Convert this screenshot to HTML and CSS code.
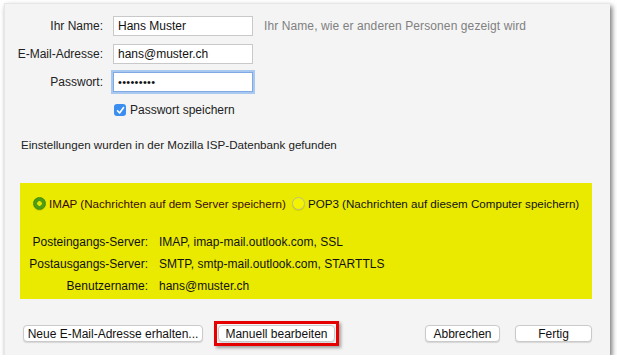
FILE: index.html
```html
<!DOCTYPE html>
<html>
<head>
    <meta charset="UTF-8">
    <title>Konto einrichten</title>
    <link rel="stylesheet" href="styles.css">
</head>
<body>
    <div class="window">
        <form class="account">
            <label class="field-label" for="name">Ihr Name:</label>
            <input class="field" type="text" id="name" value="Hans Muster">
            <span class="hint">Ihr Name, wie er anderen Personen gezeigt wird</span>

            <label class="field-label" for="email">E-Mail-Adresse:</label>
            <input class="field" type="text" id="email" value="hans@muster.ch">
            <span></span>

            <label class="field-label" for="pass">Passwort:</label>
            <input class="field focused" type="password" id="pass" value="123456789">
            <span></span>

            <span></span>
            <label class="remember"><span class="check">
                <svg width="9" height="9" viewBox="0 0 9 9"><path d="M1.5 4.8 L3.6 7 L7.6 1.6" fill="none" stroke="#fff" stroke-width="1.6" stroke-linecap="round" stroke-linejoin="round"/></svg>
            </span>Passwort speichern</label>
            <span></span>
        </form>

        <p class="found">Einstellungen wurden in der Mozilla ISP-Datenbank gefunden</p>

        <div class="config">
            <div class="protocols">
                <label class="proto imap"><span class="radio on"></span>IMAP (Nachrichten auf dem Server speichern)</label>
                <label class="proto"><span class="radio"></span>POP3 (Nachrichten auf diesem Computer speichern)</label>
            </div>
            <div class="servers">
                <span class="srv-label">Posteingangs-Server:</span>
                <span>IMAP, imap-mail.outlook.com, SSL</span>
                <span class="srv-label">Postausgangs-Server:</span>
                <span>SMTP, smtp-mail.outlook.com, STARTTLS</span>
                <span class="srv-label">Benutzername:</span>
                <span>hans@muster.ch</span>
            </div>
        </div>

        <div class="actions">
            <button class="btn btn-new" type="button">Neue E-Mail-Adresse erhalten...</button>
            <div class="marked">
                <button class="btn btn-manual" type="button">Manuell bearbeiten</button>
            </div>
            <div class="spacer"></div>
            <button class="btn btn-cancel" type="button">Abbrechen</button>
            <button class="btn btn-done" type="button">Fertig</button>
        </div>
    </div>
</body>
</html>
```

FILE: styles.css
```css
body {
    margin: 0;
    background-color: #fff;
    font-family: "Liberation Sans", Arial, sans-serif;
    font-size: 12px;
    color: #222;
}

.window {
    margin: 3px 0 0 4px;
    width: 606px;
    height: 352px;
    box-sizing: border-box;
    background-color: #f4f4f4;
    border-top: 1px solid #e6e6e6;
    border-left: 1px solid #e6e6e6;
    box-shadow: 2px 3px 5px rgba(0, 0, 0, 0.55);
}

.account {
    display: grid;
    grid-template-columns: 98px 140px auto;
    grid-auto-rows: 20px;
    column-gap: 10px;
    row-gap: 8px;
    align-items: center;
    padding: 12px 0 0 0;
}

.field-label {
    text-align: right;
}

.field {
    height: 20px;
    box-sizing: border-box;
    border: 1px solid #c9c9c9;
    background-color: #fff;
    padding: 0 4px;
    font-family: inherit;
    font-size: 12px;
    color: #111;
    outline: none;
}

.focused {
    border: 1px solid #7fa9e3;
    box-shadow: 0 0 0 2px #a9c8f0;
    font-size: 11px;
    letter-spacing: 0.3px;
}

.hint {
    color: #808080;
    padding-left: 1px;
    letter-spacing: 0.1px;
}

.remember {
    display: flex;
    align-items: center;
    gap: 4px;
    margin-left: 1px;
}

.check {
    width: 12px;
    height: 12px;
    border-radius: 3px;
    background-color: #3b8ef0;
    display: flex;
    align-items: center;
    justify-content: center;
}

.found {
    margin: 17px 0 0 16px;
    line-height: 16px;
    font-size: 11.6px;
}

.config {
    margin: 30px 0 0 15px;
    width: 572px;
    height: 116px;
    background-color: #eaea00;
    box-sizing: border-box;
    padding-top: 13px;
}

.protocols {
    display: flex;
    align-items: center;
    gap: 6px;
    padding-left: 13px;
    height: 15px;
    white-space: nowrap;
    font-size: 11.6px;
}

.proto {
    display: flex;
    align-items: center;
    gap: 3px;
    color: #111;
    flex-shrink: 0;
}

.imap {
    color: #3a0c00;
}

.radio {
    flex-shrink: 0;
    width: 13px;
    height: 13px;
    border-radius: 50%;
    box-sizing: border-box;
    border: 1px solid #bdbd88;
    background-color: #f4f400;
    box-shadow: 0 1px 1px rgba(0, 0, 0, 0.1);
}

.radio.on {
    border: 1px solid #3f8c0c;
    background: radial-gradient(circle, #e4e400 0, #e4e400 2px, #4d9c12 2.6px);
}

.servers {
    display: grid;
    grid-template-columns: 128px auto;
    column-gap: 11px;
    grid-auto-rows: 22px;
    align-items: center;
    margin-top: 20px;
    color: #111;
}

.srv-label {
    text-align: right;
}

.actions {
    display: flex;
    align-items: center;
    margin-top: 22px;
    padding: 0 18px 0 18px;
}

.btn {
    height: 17px;
    box-sizing: border-box;
    background-color: #fff;
    border: 1px solid #cacaca;
    border-radius: 4px;
    box-shadow: 0 1px 1px rgba(0, 0, 0, 0.12);
    font-family: inherit;
    font-size: 12px;
    color: #111;
    padding: 0;
}

.btn-new {
    width: 180px;
}

.marked {
    margin-left: 11px;
    border: 3px solid #e60000;
    padding: 1px;
    box-shadow: 2px 2px 3px rgba(0, 0, 0, 0.35);
}

.btn-manual {
    width: 117px;
    display: block;
}

.spacer {
    flex: 1;
}

.btn-cancel {
    width: 75px;
}

.btn-done {
    width: 77px;
    margin-left: 15px;
}
```
